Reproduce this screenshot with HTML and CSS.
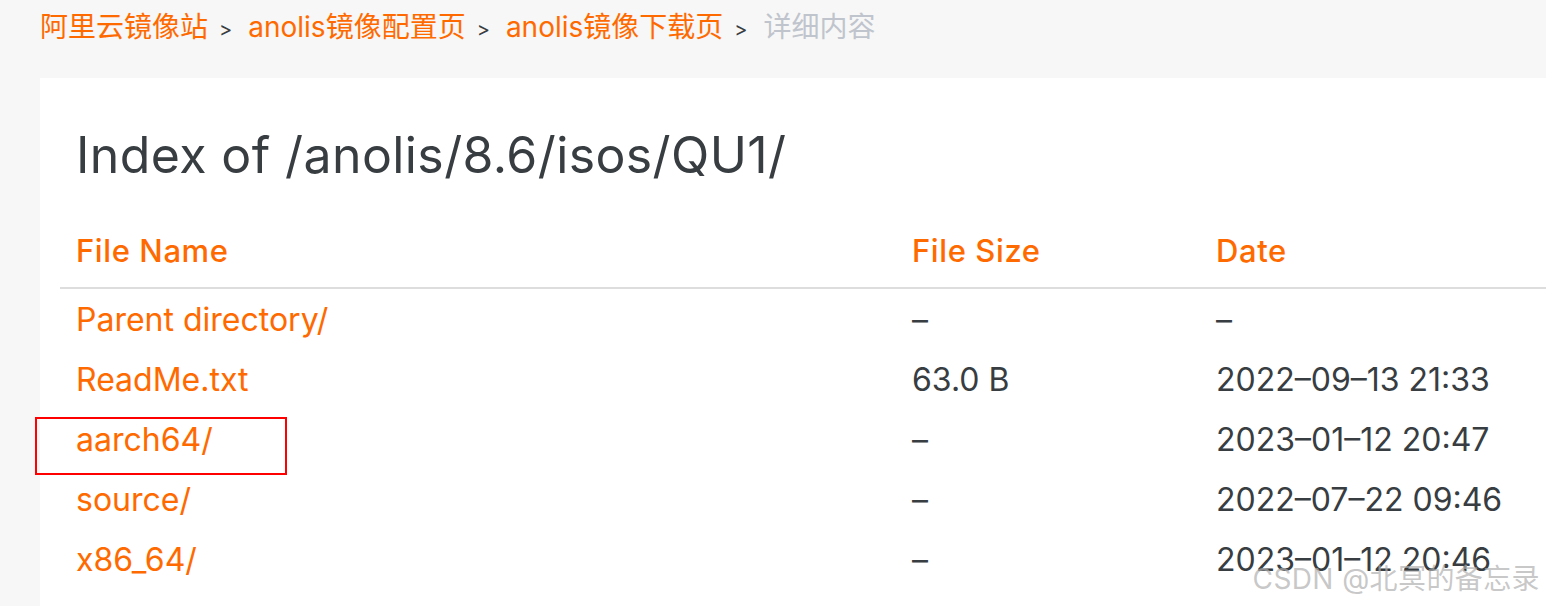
FILE: index.html
```html
<!DOCTYPE html>
<html lang="zh">
<head>
<meta charset="utf-8">
<title>Index of /anolis/8.6/isos/QU1/</title>
<link rel="stylesheet" href="styles.css">
</head>
<body>
<nav class="crumbs">
  <a class="crumb" href="#">阿里云镜像站</a><span class="sep">&gt;</span>
  <a class="crumb" href="#">anolis镜像配置页</a><span class="sep">&gt;</span>
  <a class="crumb" href="#">anolis镜像下载页</a><span class="sep">&gt;</span>
  <span class="crumb current">详细内容</span>
</nav>
<main class="panel">
  <h1 class="title">Index of /anolis/8.6/isos/QU1/</h1>
  <table class="listing">
    <thead>
      <tr><th class="c-name">File Name</th><th class="c-size">File Size</th><th class="c-date">Date</th></tr>
    </thead>
    <tbody>
      <tr><td><a href="#">Parent directory/</a></td><td>–</td><td>–</td></tr>
      <tr><td><a href="#">ReadMe.txt</a></td><td>63.0 B</td><td>2022–09–13 21:33</td></tr>
      <tr><td class="marked"><a href="#">aarch64/</a><span class="mark"></span></td><td>–</td><td>2023–01–12 20:47</td></tr>
      <tr><td><a href="#">source/</a></td><td>–</td><td>2022–07–22 09:46</td></tr>
      <tr><td><a href="#">x86_64/</a></td><td>–</td><td>2023–01–12 20:46</td></tr>
    </tbody>
  </table>
</main>
<div class="watermark">CSDN @北冥的备忘录</div>
</body>
</html>
```
FILE: styles.css
```css
html, body {
  margin: 0;
  padding: 0;
  background: #f7f7f7;
  font-family: Inter, "Noto Sans CJK SC", sans-serif;
  color: #373d41;
  overflow: hidden;
  height: 606px;
}
a { text-decoration: none; color: #ff6a00; }

.crumbs {
  height: 78px;
  padding-left: 40px;
  display: flex;
  align-items: flex-start;
  padding-top: 9px;
  box-sizing: border-box;
  font-size: 28px;
  line-height: 36px;
}
.crumb { color: #ff6a00; }
.crumb.current { color: #c0c4cc; }
.sep {
  font-size: 20px;
  color: #373d41;
  margin: 0 16px 0 11px;
  line-height: 40px;
}

.panel {
  margin-left: 40px;
  background: #fff;
  padding-top: 47px;
  height: 528px;
  box-sizing: border-box;
}
.title {
  margin: 0 0 29px 36px;
  font-size: 50px;
  letter-spacing: 0.4px;
  line-height: 60px;
  font-weight: 400;
  color: #373d41;
}
.listing {
  margin-left: 20px;
  width: calc(100% - 20px);
  border-collapse: collapse;
  font-size: 32px;
}
.listing th {
  text-align: left;
  color: #ff6a00;
  font-weight: 500;
  font-size: 31px;
  letter-spacing: 0.6px;
  height: 73px;
  padding: 0 0 0 16px;
  border-bottom: 2px solid #dddddd;
}
.c-name { width: 820px; }
.c-size { width: 288px; }
.listing td {
  height: 60px;
  padding: 0 0 0 16px;
  color: #373d41;
}
.marked { position: relative; }
.mark {
  position: absolute;
  left: -25px;
  top: 8px;
  width: 248px;
  height: 54px;
  border: 2px solid #f00;
}
.watermark {
  position: absolute;
  right: 6px;
  bottom: 9px;
  font-size: 28px;
  letter-spacing: 0.4px;
  color: rgba(175, 175, 175, 0.7);
}
```
